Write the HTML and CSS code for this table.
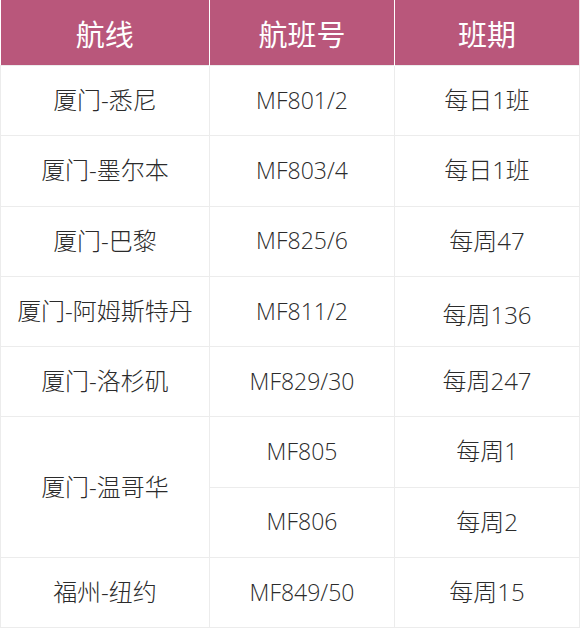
FILE: index.html
```html
<!DOCTYPE html>
<html lang="zh-CN">
<head>
<meta charset="utf-8">
<title>航线</title>
<link rel="stylesheet" href="styles.css">
</head>
<body>
<table class="routes">
  <colgroup>
    <col class="c1"><col class="c2"><col class="c3">
  </colgroup>
  <thead>
    <tr class="head"><th>航线</th><th>航班号</th><th>班期</th></tr>
  </thead>
  <tbody>
    <tr><td>厦门-悉尼</td><td class="code">MF801/2</td><td>每日1班</td></tr>
    <tr><td>厦门-墨尔本</td><td class="code">MF803/4</td><td>每日1班</td></tr>
    <tr><td>厦门-巴黎</td><td class="code">MF825/6</td><td>每周47</td></tr>
    <tr><td>厦门-阿姆斯特丹</td><td class="code">MF811/2</td><td class="low">每周136</td></tr>
    <tr><td>厦门-洛杉矶</td><td class="code">MF829/30</td><td>每周247</td></tr>
    <tr><td rowspan="2">厦门-温哥华</td><td class="code">MF805</td><td>每周1</td></tr>
    <tr><td class="code">MF806</td><td>每周2</td></tr>
    <tr><td>福州-纽约</td><td class="code">MF849/50</td><td>每周15</td></tr>
  </tbody>
</table>
</body>
</html>
```
FILE: styles.css
```css
html, body {
  margin: 0;
  padding: 0;
  background: #ffffff;
}
.routes {
  width: 579px;
  border-collapse: collapse;
  table-layout: fixed;
  font-family: "Open Sans", "Noto Sans CJK SC", sans-serif;
  color: #2b2b2b;
}
.c1 { width: 209px; }
.c2 { width: 185px; }
.c3 { width: 185px; }
.head th {
  height: 65px;
  padding: 0;
  background: #b9577b;
  color: #ffffff;
  font-family: "Noto Sans CJK SC", sans-serif;
  font-size: 29px;
  font-weight: 400;
  text-align: center;
  border-right: 1px solid #ffffff;
}
.head th:last-child {
  border-right: 1px solid #f3e3ea;
}
.routes td {
  height: 69.25px;
  padding: 0;
  text-align: center;
  vertical-align: middle;
  font-size: 24px;
  font-weight: 300;
  border: 1px solid #ececec;
  line-height: 1.2;
}
.routes td.code {
  font-size: 23px;
}
.routes td.low {
  height: 61.25px;
  padding-top: 8px;
}
```
